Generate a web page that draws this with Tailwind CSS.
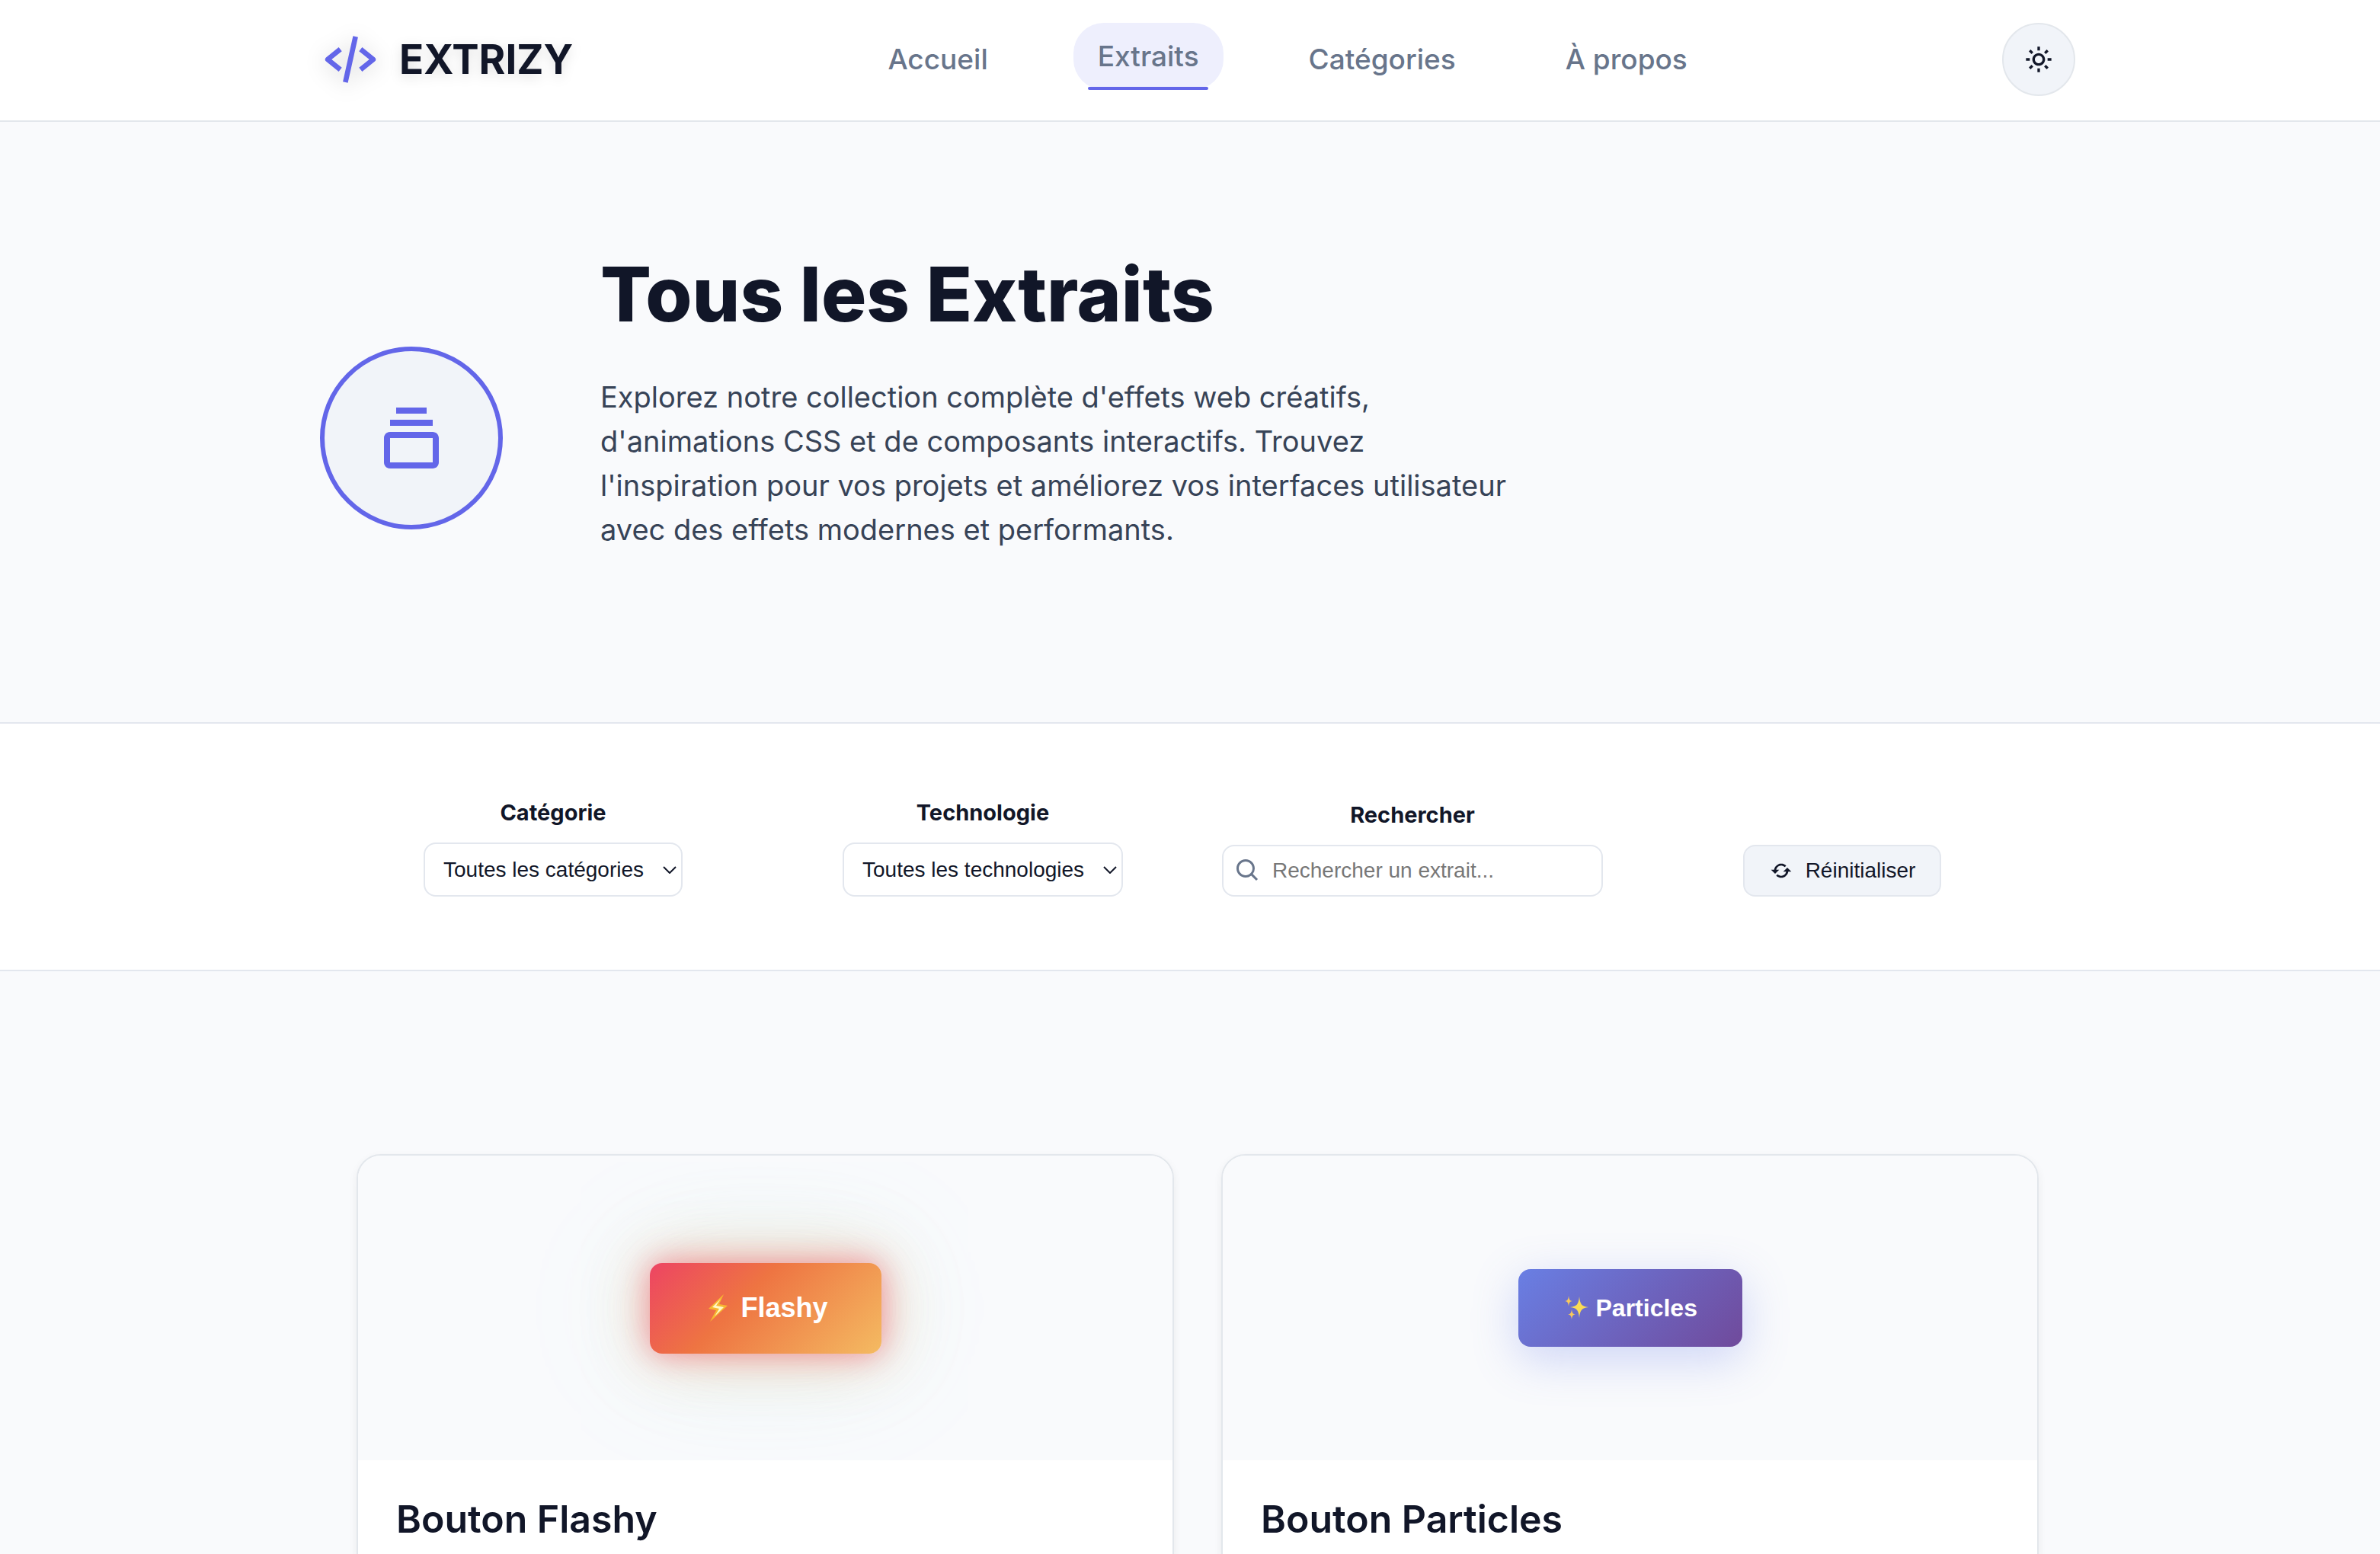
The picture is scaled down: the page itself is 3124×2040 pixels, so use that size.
<!DOCTYPE html>
<html lang="fr">
<head>
<meta charset="utf-8">
<meta name="viewport" content="width=device-width, initial-scale=1">
<title>EXTRIZY – Tous les Extraits</title>
<script src="https://cdn.jsdelivr.net/npm/@tailwindcss/browser@4"></script>
</head>
<body class="bg-[#f9fafc] font-[Inter,sans-serif] text-[#111628]">

<header class="border-b-2 border-[#e3e7ec] bg-white pl-5">
  <div class="mx-auto flex h-[158px] max-w-[2304px] items-center justify-between pb-0.5">
    <a href="#" class="flex items-center gap-6">
      <svg class="size-20 fill-[#6366e9] drop-shadow-[0_4px_14px_rgba(0,0,0,0.2)]" viewBox="0 0 24 24" aria-hidden="true"><path d="m7.375 16.781 1.25-1.562L4.601 12l4.024-3.219-1.25-1.562-5 4a1 1 0 0 0 0 1.562l5 4zm9.25-9.562-1.25 1.562L19.399 12l-4.024 3.219 1.25 1.562 5-4a1 1 0 0 0 0-1.562l-5-4zm-1.649-4.003-4 18-1.952-.434 4-18z"/></svg>
      <span class="text-[53px] leading-none font-bold drop-shadow-[0_4px_8px_rgba(0,0,0,0.12)]">EXTRIZY</span>
    </a>
    <nav class="flex items-center gap-20 text-[37px] leading-[56px] font-medium text-[#68758b]">
      <a href="#" class="px-8 py-4">Accueil</a>
      <a href="#" class="relative mb-2 rounded-[40px] bg-[#eeeffd] px-8 py-4" aria-current="page">Extraits<span class="absolute bottom-0 left-[10%] h-1 w-4/5 rounded-sm bg-[#6366e9]"></span></a>
      <a href="#" class="px-8 py-4">Catégories</a>
      <a href="#" class="px-8 py-4">À propos</a>
    </nav>
    <button type="button" aria-label="Changer de thème" class="grid size-24 place-items-center rounded-full border-2 border-[#e3e7ec] bg-[#f1f4f9]">
      <svg class="size-10 fill-[#111628]" viewBox="0 0 24 24" aria-hidden="true"><path d="M6.993 12c0 2.761 2.246 5.007 5.007 5.007s5.007-2.246 5.007-5.007S14.761 6.993 12 6.993 6.993 9.239 6.993 12zM12 8.993c1.658 0 3.007 1.349 3.007 3.007S13.658 15.007 12 15.007 8.993 13.658 8.993 12 10.342 8.993 12 8.993zM10.998 19h2v3h-2zm0-17h2v3h-2zm-9 9h3v2h-3zm17 0h3v2h-3zM4.219 18.363l2.12-2.122 1.415 1.414-2.12 2.122zM16.24 6.344l2.122-2.122 1.414 1.414-2.122 2.122zM6.342 7.759 4.22 5.637l1.415-1.414 2.12 2.122zm13.434 10.605-1.414 1.414-2.122-2.122 1.414-1.414z"/></svg>
    </button>
  </div>
</header>

<main>
  <section class="pt-[168px] pb-[126px] pl-5">
    <div class="mx-auto flex max-w-[2304px] items-center gap-32">
      <div class="grid size-60 shrink-0 place-items-center rounded-full border-6 border-[#6366e9] bg-[#f1f4f9]">
        <svg class="size-24 fill-[#6366e9]" viewBox="0 0 24 24" aria-hidden="true"><path d="M19 10H5c-1.103 0-2 .897-2 2v8c0 1.103.897 2 2 2h14c1.103 0 2-.897 2-2v-8c0-1.103-.897-2-2-2zM5 20v-8h14l.002 8H5zM5 6h14v2H5zm2-4h10v2H7z"/></svg>
      </div>
      <div class="max-w-[1240px] pb-[98px]">
        <h1 class="mb-12 text-[99px] leading-[116px] font-extrabold">Tous les Extraits</h1>
        <p class="text-[38px] leading-[58px] text-[#374357]">Explorez notre collection complète d'effets web créatifs,<br>d'animations CSS et de composants interactifs. Trouvez<br>l'inspiration pour vos projets et améliorez vos interfaces utilisateur<br>avec des effets modernes et performants.</p>
      </div>
    </div>
  </section>

  <section class="border-y-2 border-[#e3e7ee] bg-white py-24 pl-5">
    <form class="mx-auto grid max-w-[2192px] grid-cols-4 items-end justify-items-center gap-16 font-['Liberation_Sans',sans-serif] text-[28px]">
      <div class="flex flex-col items-center gap-[18px]">
        <label for="categorie" class="font-[Inter,sans-serif] text-[29px] leading-[42px] font-bold">Catégorie</label>
        <div class="relative">
          <select id="categorie" class="h-[71px] w-[340px] appearance-none rounded-2xl border-2 border-[#e3e7ee] bg-white pl-6"><option>Toutes les catégories</option></select>
          <svg class="pointer-events-none absolute top-[31px] right-2 h-[10px] w-[18px] fill-none stroke-[#111628] stroke-2" viewBox="0 0 18 10" aria-hidden="true"><path d="M1 1l8 8 8-8"/></svg>
        </div>
      </div>
      <div class="flex flex-col items-center gap-[18px]">
        <label for="technologie" class="font-[Inter,sans-serif] text-[29px] leading-[42px] font-bold">Technologie</label>
        <div class="relative">
          <select id="technologie" class="h-[71px] w-[368px] appearance-none rounded-2xl border-2 border-[#e3e7ee] bg-white pl-6"><option>Toutes les technologies</option></select>
          <svg class="pointer-events-none absolute top-[31px] right-2 h-[10px] w-[18px] fill-none stroke-[#111628] stroke-2" viewBox="0 0 18 10" aria-hidden="true"><path d="M1 1l8 8 8-8"/></svg>
        </div>
      </div>
      <div class="flex w-full flex-col items-center gap-[18px]">
        <label for="recherche" class="font-[Inter,sans-serif] text-[29px] leading-[42px] font-bold">Rechercher</label>
        <div class="relative w-full">
          <svg class="pointer-events-none absolute top-4 left-4 size-9 fill-[#68758b]" viewBox="0 0 24 24" aria-hidden="true"><path d="M10 18a7.952 7.952 0 0 0 4.897-1.688l4.396 4.396 1.414-1.414-4.396-4.396A7.952 7.952 0 0 0 18 10c0-4.411-3.589-8-8-8s-8 3.589-8 8 3.589 8 8 8zm0-14c3.309 0 6 2.691 6 6s-2.691 6-6 6-6-2.691-6-6 2.691-6 6-6z"/></svg>
          <input id="recherche" type="text" placeholder="Rechercher un extrait..." class="block h-[68px] w-full rounded-2xl border-2 border-[#e3e7ee] pl-16 placeholder:text-[#777777]">
        </div>
      </div>
      <button type="button" class="flex h-[68px] w-[260px] items-center justify-center gap-4 rounded-2xl border-2 border-[#e3e7ee] bg-[#f1f4f9]">
        <svg class="size-8 fill-[#111628]" viewBox="0 0 24 24" aria-hidden="true"><path d="M10 11H7.101l.001-.009a4.956 4.956 0 0 1 .752-1.787 5.054 5.054 0 0 1 2.2-1.811c.302-.128.617-.226.938-.291a5.078 5.078 0 0 1 2.018 0 4.978 4.978 0 0 1 2.525 1.361l1.416-1.412a7.036 7.036 0 0 0-2.224-1.501 6.921 6.921 0 0 0-1.315-.408 7.079 7.079 0 0 0-2.819 0 6.94 6.94 0 0 0-1.316.409 7.04 7.04 0 0 0-3.08 2.534 6.978 6.978 0 0 0-1.054 2.505c-.028.135-.043.273-.063.41H2l4 4 4-4zm4 2h2.899l-.001.008a4.976 4.976 0 0 1-2.103 3.138 4.943 4.943 0 0 1-1.787.752 5.073 5.073 0 0 1-2.017 0 4.956 4.956 0 0 1-1.787-.752 5.072 5.072 0 0 1-.74-.61L7.05 16.95a7.032 7.032 0 0 0 2.225 1.5c.424.18.867.317 1.315.408a7.07 7.07 0 0 0 2.818 0 7.031 7.031 0 0 0 4.395-2.945 6.974 6.974 0 0 0 1.053-2.503c.027-.135.043-.273.063-.41H22l-4-4-4 4z"/></svg>
        Réinitialiser
      </button>
    </form>
  </section>

  <section class="pt-60 pl-5">
    <div class="mx-auto grid max-w-[2208px] grid-cols-2 gap-[62px]">
      <article class="overflow-hidden rounded-4xl border-2 border-[#e3e7ec] bg-white shadow-[0_4px_12px_rgba(0,0,0,0.06)]">
        <div class="grid h-[400px] place-items-center overflow-hidden bg-[#f9fafc]">
          <button type="button" class="flex h-[119px] w-[304px] items-center gap-[10px] rounded-2xl bg-[linear-gradient(135deg,#ed4463,#ee7442_40%,#f4bb62)] pl-16 font-['Liberation_Sans',sans-serif] text-[36px] font-bold text-white shadow-[0_0_40px_rgba(237,68,99,0.55),0_0_80px_rgba(240,147,43,0.25),0_0_120px_rgba(244,187,98,0.2),0_0_160px_10px_rgba(120,225,250,0.18)]">
            <svg class="h-11 w-[46px]" viewBox="0 0 46 44" aria-hidden="true"><path d="M33 4 13 23l10 2-8 15 23-21-11-2z" fill="#f7b731"/><path d="M29 10 18 21l9 2-6 10 12-12-10-2z" fill="#fff9c4"/></svg>
            Flashy
          </button>
        </div>
        <div class="px-[50px] py-12">
          <h2 class="text-[50px] leading-[58px] font-semibold">Bouton Flashy</h2>
        </div>
      </article>
      <article class="overflow-hidden rounded-4xl border-2 border-[#e3e7ec] bg-white shadow-[0_4px_12px_rgba(0,0,0,0.06)]">
        <div class="grid h-[400px] place-items-center overflow-hidden bg-[#f9fafc]">
          <button type="button" class="flex h-[102px] w-[294px] items-center gap-1.5 rounded-2xl bg-[linear-gradient(135deg,#697fe4,#704a9b)] pl-14 font-['Liberation_Sans',sans-serif] text-[32px] font-bold text-white shadow-[0_16px_60px_rgba(102,126,234,0.3)]">
            <svg class="size-10 fill-[#fbdc55]" viewBox="0 0 40 40" aria-hidden="true"><path d="M24 5c1 10 3 13 12 14-9 1-11 4-12 14-1-10-3-13-12-14 9-1 11-4 12-14z"/><path d="M10 4c.6 5 1.500 6.500 5 7-3.500.5-4.400 2-5 7-.6-5-1.500-6.500-5-7 3.500-.5 4.400-2 5-7zM14 22c.6 4.500 1.500 6 5 6.500-3.500.5-4.400 2-5 6.500-.6-4.500-1.500-6-5-6.500 3.500-.5 4.400-2 5-6.500z" fill="#f9c95c"/></svg>
            Particles
          </button>
        </div>
        <div class="px-[50px] py-12">
          <h2 class="text-[50px] leading-[58px] font-semibold">Bouton Particles</h2>
        </div>
      </article>
    </div>
  </section>
</main>
</body>
</html>
